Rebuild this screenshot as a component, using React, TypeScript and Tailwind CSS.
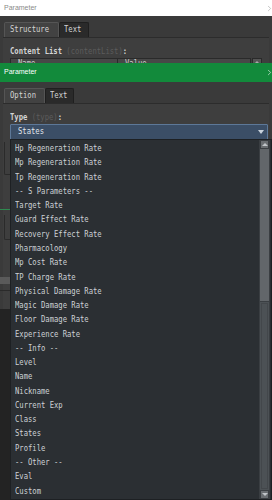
import { ChevronRight } from "lucide-react";

const items = [
  "Hp Regeneration Rate",
  "Mp Regeneration Rate",
  "Tp Regeneration Rate",
  "-- S Parameters --",
  "Target Rate",
  "Guard Effect Rate",
  "Recovery Effect Rate",
  "Pharmacology",
  "Mp Cost Rate",
  "TP Charge Rate",
  "Physical Damage Rate",
  "Magic Damage Rate",
  "Floor Damage Rate",
  "Experience Rate",
  "-- Info --",
  "Level",
  "Name",
  "Nickname",
  "Current Exp",
  "Class",
  "States",
  "Profile",
  "-- Other --",
  "Eval",
  "Custom",
];

const mono = "font-['DejaVu_Sans_Mono',monospace]";

function Tabs({ first, second }: { first: string; second: string }) {
  return (
    <div className={`flex pl-1 pt-[6px] text-[8px] ${mono}`}>
      <div className="h-[15px] flex items-center px-[5px] bg-[#424242] border border-[#555] border-b-0 rounded-t-[2px] text-[#d4d4d4]">
        <span className="scale-x-90 origin-left inline-block">{first}</span>
      </div>
      <div className="h-[15px] flex items-center px-[4px] bg-[#2a2a2a] border border-[#1f1f1f] border-b-0 rounded-t-[2px] text-[#d4d4d4]">
        <span className="scale-x-90 origin-left inline-block">{second}</span>
      </div>
    </div>
  );
}

function Label({ name, id }: { name: string; id: string }) {
  return (
    <div className={`h-[9px] flex items-center text-[8px] ${mono} text-[#d4d4d4]`}>
      <span className="scale-x-90 origin-left inline-block whitespace-nowrap font-semibold">
        {name} <span className="text-[#5c5c5c] font-normal">({id})</span>:
      </span>
    </div>
  );
}

export default function App() {
  return (
    <div className="relative w-[272px] h-[500px] overflow-hidden bg-[#3a3a3a] font-['Liberation_Sans',sans-serif]">
      <div className="h-4 bg-white flex items-center justify-between pl-1 pr-0 text-[7px] text-[#8a8a8a]">
        <span>Parameter</span>
        <ChevronRight size={9} strokeWidth={1.5} className="text-[#9a9a9a] -mr-[2px]" />
      </div>

      <div className="h-[47px] overflow-hidden">
        <Tabs first="Structure" second="Text" />
        <div className="mx-[3px] h-[40px] bg-[#3e3e3e] border-t border-[#2c2c2c] pt-[9px] px-[7px]">
          <Label name="Content List" id="contentList" />
          <div className={`mt-[2px] flex h-[12px] text-[8px] ${mono} text-[#cfcfcf]`}>
            <div className="w-[111px] bg-[#474747] border border-[#2a2a2a] pl-[7px] leading-[10px]">
              <span className="scale-x-90 origin-left inline-block">Name</span>
            </div>
            <div className="w-[137px] bg-[#474747] border border-l-0 border-[#2a2a2a] pl-[7px] leading-[10px]">
              <span className="scale-x-90 origin-left inline-block">Value</span>
            </div>
            <div className="w-[10px] ml-[1px] bg-[#555] border border-[#2a2a2a] flex justify-center pt-[2px]">
              <div className="w-0 h-0 border-x-[3px] border-x-transparent border-b-[3px] border-b-[#aaa]" />
            </div>
          </div>
        </div>
      </div>

      <div className="h-[19px] bg-[#128a3b] flex items-center justify-between pl-1 text-[7px] text-white">
        <span>Parameter</span>
        <ChevronRight size={9} strokeWidth={1.5} className="-mr-[2px]" />
      </div>

      <div>
        <Tabs first="Option" second="Text" />
        <div className="mx-[3px] h-[397px] bg-[#3e3e3e] border-t border-[#2c2c2c] pt-[9px] pl-[7px] pr-[1px]">
          <Label name="Type" id="type" />
          <div className={`mt-[2px] h-[16px] bg-[#3b4e66] border border-[#5d7898] rounded-[1px] flex items-center justify-between pl-[7px] pr-[3px] text-[8px] ${mono} text-[#e2e6ea]`}>
            <span className="scale-x-90 origin-left inline-block">States</span>
            <div className="w-0 h-0 border-x-[3px] border-x-transparent border-t-[4px] border-t-[#c9d2dc]" />
          </div>
          <div className="-ml-[6px] mt-[2px] w-[6px] h-[33px] border-l border-b border-[#2a2a2a] rounded-bl-[2px]" />
          <div className="-ml-[10px] mt-[34px] w-[10px] h-px bg-[#2f8a50]" />
          <div className="-ml-[6px] mt-[5px] w-[6px] h-[25px] border-l border-b border-[#2a2a2a] rounded-bl-[2px]" />
          <div className="-ml-[10px] mt-[37px] w-[10px] h-[7px] bg-[#5a5a5a]" />
          <div className="-ml-[10px] mt-[6px] w-[10px] h-px bg-[#2a2a2a]" />
          <div className="-ml-[10px] mt-[18px] w-[10px] h-[200px] bg-[#232323]" />
        </div>
      </div>

      <div className="absolute left-[10px] top-[139px] w-[262px] h-[361px] bg-[#2b2f33] border border-[#1d2023] flex">
        <div className={`flex-1 pt-[2px] pl-[4px] text-[8px] ${mono} text-[#cdd1d5]`}>
          {items.map((t) => (
            <div key={t} className="h-[14.27px] flex items-center whitespace-nowrap">
              <span className="scale-x-90 origin-left inline-block">{t}</span>
            </div>
          ))}
        </div>
        <div className="w-[11px] mr-[1px] flex flex-col bg-[#4c5155] border-x border-[#3a3e42]">
          <div className="h-[9px] bg-[#6a6e72] border border-[#3a3e42] flex items-center justify-center">
            <div className="w-0 h-0 border-x-[3px] border-x-transparent border-b-[3px] border-b-[#c0c4c8]" />
          </div>
          <div className="h-[153px] bg-[#62666a] border-b border-[#3a3e42]" />
          <div className="flex-1 border border-[#43474b] m-[1px]" />
          <div className="h-[9px] bg-[#6a6e72] border border-[#3a3e42] flex items-center justify-center">
            <div className="w-0 h-0 border-x-[3px] border-x-transparent border-t-[3px] border-t-[#c0c4c8]" />
          </div>
        </div>
      </div>
    </div>
  );
}
